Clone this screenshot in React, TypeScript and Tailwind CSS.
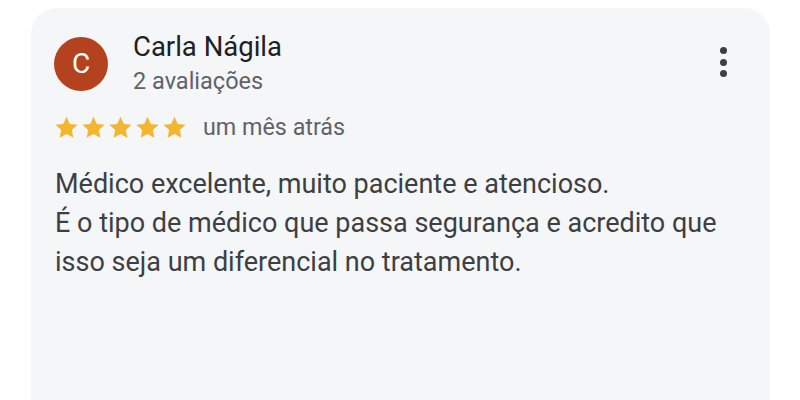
import React from 'react';

const Star: React.FC = () => (
  <svg width="25" height="23" viewBox="0 0 24 23" className="block">
    <path
      d="M12 0.8l3.3 7.1 7.8 0.9-5.8 5.3 1.6 7.7L12 17.9l-6.9 3.9 1.6-7.7L0.9 8.8l7.8-0.9z"
      fill="#f4b630"
    />
  </svg>
);

export default function App() {
  return (
    <div className="w-[800px] h-[400px] bg-white overflow-hidden font-['Roboto',sans-serif]">
      <div className="ml-[31px] mt-[8px] w-[739px] h-[420px] rounded-[26px] bg-[#f5f6f8] pl-[23px] pr-[40px] pt-[29px]">
        <div className="flex items-start">
          <div className="w-[54px] h-[54px] rounded-full bg-[#b4421f] flex items-center justify-center text-white text-[28px] leading-none shrink-0">
            C
          </div>
          <div className="ml-[25px] flex-1">
            <div className="text-[27.5px] leading-[32px] text-[#202124] -mt-[6px]">Carla Nágila</div>
            <div className="text-[23.5px] leading-[28px] text-[#5f6368] mt-[4px]">2 avaliações</div>
          </div>
          <div className="flex flex-col items-center gap-[4.5px] mt-[10px] mr-[3px]">
            <span className="w-[7px] h-[7px] rounded-full bg-[#3c4043]" />
            <span className="w-[7px] h-[7px] rounded-full bg-[#3c4043]" />
            <span className="w-[7px] h-[7px] rounded-full bg-[#3c4043]" />
          </div>
        </div>
        <div className="flex items-center mt-[19px]">
          <div className="flex gap-[2px]">
            <Star />
            <Star />
            <Star />
            <Star />
            <Star />
          </div>
          <span className="ml-[16px] text-[23.3px] text-[#5f6368] leading-[26px]">um mês atrás</span>
        </div>
        <div className="mt-[25px] ml-[1px] text-[27px] leading-[39px] text-[#3c4043]">
          <div>Médico excelente, muito paciente e atencioso.</div>
          <div>É o tipo de médico que passa segurança e acredito que</div>
          <div>isso seja um diferencial no tratamento.</div>
        </div>
      </div>
    </div>
  );
}
